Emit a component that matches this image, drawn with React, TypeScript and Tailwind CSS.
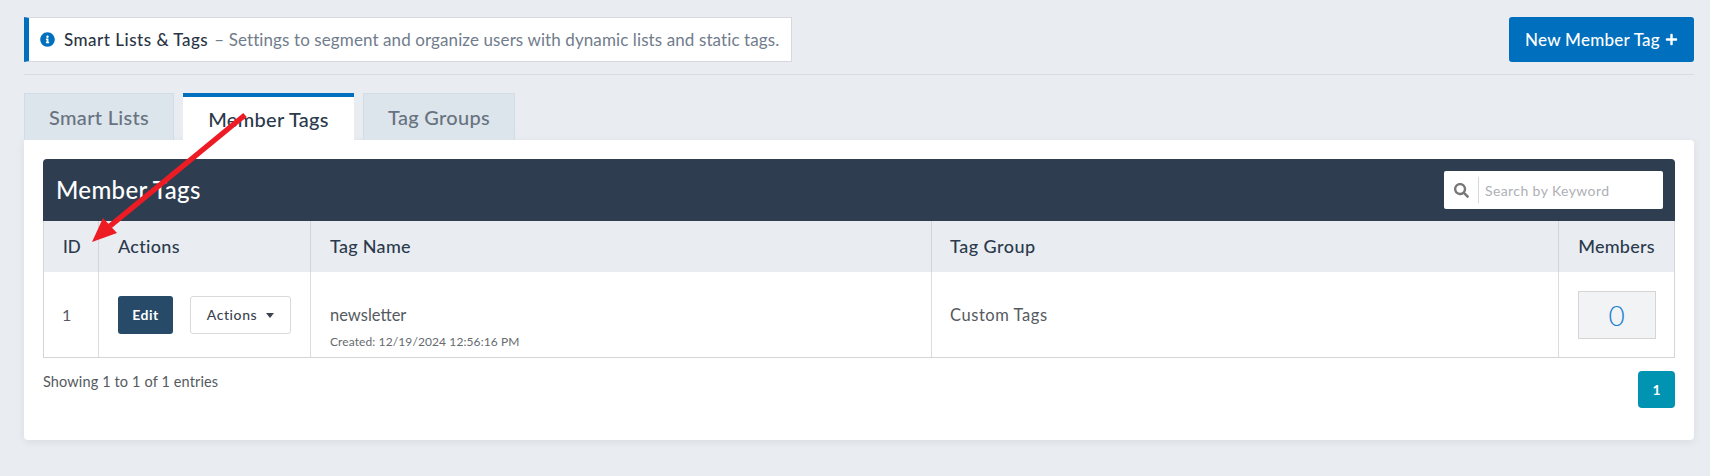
import { FaInfoCircle, FaPlus, FaSearch } from "react-icons/fa"

const font = "font-['Lato','Open_Sans',sans-serif]"

function Arrow() {
  return (
    <svg className="absolute left-0 top-0 pointer-events-none" width="300" height="300">
      <line x1="245" y1="115" x2="110" y2="226" stroke="#ed1c24" strokeWidth="5.5" />
      <polygon points="92,242 103,218 117,233" fill="#ed1c24" />
    </svg>
  )
}

export default function App() {
  return (
    <div className={`relative h-[476px] bg-[#e9edf2] pl-[24px] pr-[16px] pt-[17px] overflow-hidden ${font}`}>
      {/* Top bar */}
      <div className="flex justify-between h-[45px]">
        <div className="flex items-center w-[768px] bg-white border border-[#d5d9de] border-l-[5px] border-l-[#006fbe] pl-[11px] text-[17px] whitespace-nowrap">
          <FaInfoCircle size={15} className="shrink-0 text-[#006fbe]" />
          <span className="ml-[9px] font-medium text-[#2b3444] tracking-[0.5px]">Smart Lists &amp; Tags</span>
          <span className="ml-[6px] text-[#717c8c] tracking-[0.1px]">– Settings to segment and organize users with dynamic lists and static tags.</span>
        </div>
        <button className="flex items-center justify-center gap-[5px] w-[185px] rounded-[3px] bg-[#006fbe] text-white text-[17px] font-medium tracking-[0.25px]">
          New Member Tag
          <FaPlus size={13} />
        </button>
      </div>
      <div className="mt-[12px] border-b border-[#d9dde2]" />

      {/* Tabs */}
      <div className="flex gap-[9px] mt-[18px] h-[47px] text-[20px] font-medium tracking-[0.3px]">
        <div className="flex items-center justify-center w-[150px] bg-[#dce4ec] border border-b-0 border-[#d2dce6] text-[#68737f]">Smart Lists</div>
        <div className="flex items-center justify-center w-[171px] bg-white border-t-4 border-[#006fbe] text-[#2b3a4c]">Member Tags</div>
        <div className="flex items-center justify-center w-[152px] bg-[#dce4ec] border border-b-0 border-[#d2dce6] text-[#68737f]">Tag Groups</div>
      </div>

      {/* Card */}
      <div className="h-[300px] bg-white rounded-b-[4px] rounded-tr-[4px] shadow-[0_2px_8px_rgba(0,0,0,0.07)] px-[19px] pt-[19px]">
        <div className="flex items-center justify-between h-[62px] bg-[#2e3e50] rounded-t-[4px] pl-[13px] pr-[12px]">
          <div className="text-white text-[24px] font-medium tracking-[0.35px]">Member Tags</div>
          <div className="flex items-center w-[219px] h-[38px] bg-white rounded-[2px]">
            <div className="flex items-center justify-center w-[35px] h-[26px] border-r border-[#d5d9de]">
              <FaSearch size={15} className="text-[#77777a]" />
            </div>
            <span className="pl-[6px] text-[14px] text-[#aeb0b5] tracking-[0.4px]">Search by Keyword</span>
          </div>
        </div>

        <div className="grid grid-cols-[54px_212px_621px_627px_116px] border-x border-b border-[#d5d5d5] text-[18px]">
          {/* Header row */}
          <div className="flex items-center h-[51px] pl-[19px] bg-[#e9edf2] font-medium text-[#2b3a4c] text-[17px]">ID</div>
          <div className="flex items-center pl-[19px] bg-[#e9edf2] border-l border-[#d5d5d5] font-medium text-[#2b3a4c] tracking-[0.3px]">Actions</div>
          <div className="flex items-center pl-[19px] bg-[#e9edf2] border-l border-[#d5d5d5] font-medium text-[#2b3a4c] tracking-[0.3px]">Tag Name</div>
          <div className="flex items-center pl-[18px] bg-[#e9edf2] border-l border-[#d5d5d5] font-medium text-[#2b3a4c] tracking-[0.5px]">Tag Group</div>
          <div className="flex items-center justify-center bg-[#e9edf2] border-l border-[#d5d5d5] font-medium text-[#2b3a4c] tracking-[0.2px]">Members</div>

          {/* Data row */}
          <div className="flex items-center h-[85px] pl-[18px] text-[#555a60] text-[16px]">1</div>
          <div className="flex items-center gap-[17px] pl-[19px] border-l border-[#dcdcdc]">
            <button className="w-[55px] h-[38px] rounded-[3px] bg-[#264a67] text-white text-[14px] font-bold tracking-[0.5px]">Edit</button>
            <button className="flex items-center justify-center gap-[9px] w-[101px] h-[38px] rounded-[3px] bg-white border border-[#d9d9d9] text-[#3b4250] text-[14px] font-medium tracking-[0.6px]">
              Actions
              <span className="border-x-[4px] border-t-[5px] border-x-transparent border-t-[#3b4250] mt-[1px]" />
            </button>
          </div>
          <div className="flex flex-col pl-[19px] pt-[31px] border-l border-[#dcdcdc]">
            <div className="text-[16.5px] leading-[24px] text-[#555a60]">newsletter</div>
            <div className="mt-[7px] text-[12px] leading-[16px] text-[#666b70] tracking-[0.1px]">Created: 12/19/2024 12:56:16 PM</div>
          </div>
          <div className="flex items-center pl-[18px] pt-[2px] border-l border-[#dcdcdc] text-[16.5px] text-[#555a60] tracking-[0.55px]">Custom Tags</div>
          <div className="flex items-center justify-center border-l border-[#dcdcdc]">
            <div className="flex items-center justify-center w-[78px] h-[48px] bg-[#f2f3f5] border border-[#d5d5d5] text-[#1a82d2] text-[28px] font-light">0</div>
          </div>
        </div>

        {/* Footer */}
        <div className="flex justify-between mt-[13px]">
          <div className="text-[14.5px] leading-[22px] text-[#555a60] tracking-[0.13px]">Showing 1 to 1 of 1 entries</div>
          <div className="flex items-center justify-center w-[37px] h-[37px] rounded-[4px] bg-[#0093b2] text-white text-[14px] font-bold">1</div>
        </div>
      </div>

      <Arrow />
    </div>
  )
}
